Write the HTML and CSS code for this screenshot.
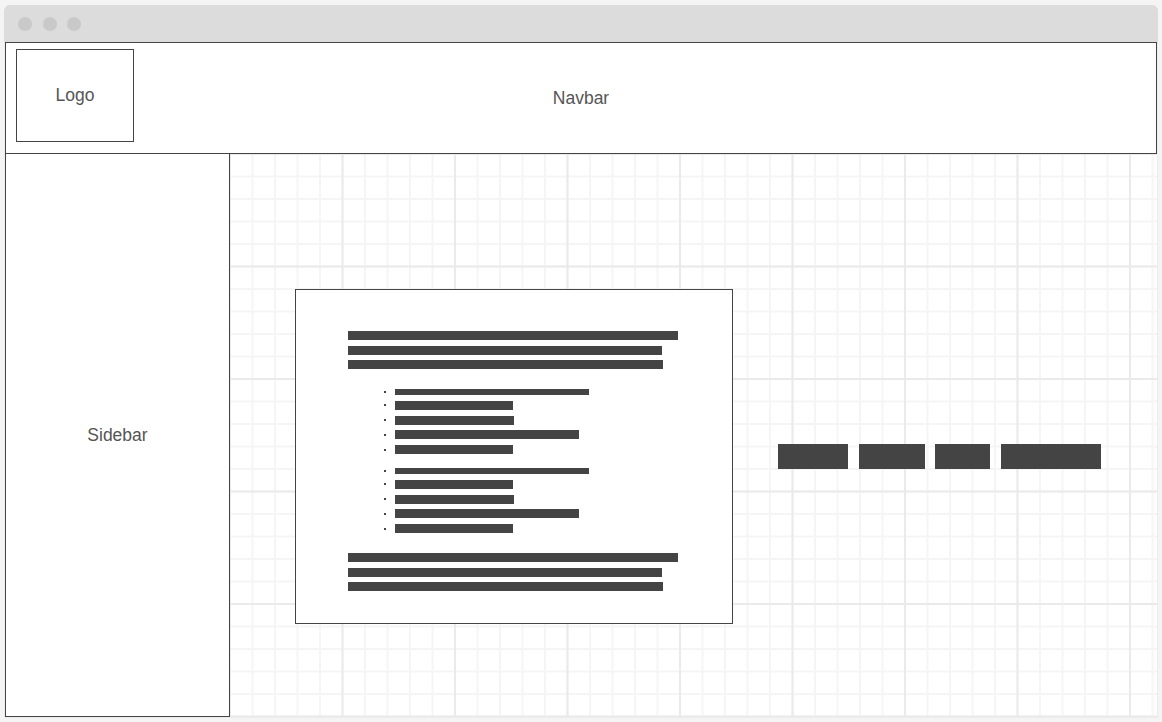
FILE: index.html
```html
<!DOCTYPE html>
<html lang="en">
<head>
<meta charset="utf-8">
<title>Wireframe</title>
<link rel="stylesheet" href="styles.css">
</head>
<body>
<div class="window">
  <div class="titlebar">
    <span class="dot"></span>
    <span class="dot"></span>
    <span class="dot"></span>
  </div>
  <div class="frame">
    <header class="navbar">
      <div class="logo">Logo</div>
      <div class="nav-label">Navbar</div>
      <div class="nav-spacer"></div>
    </header>
    <div class="body">
      <aside class="sidebar">Sidebar</aside>
      <main class="main">
        <div class="row">
          <section class="doc">
            <div class="para">
              <div class="bar w330"></div>
              <div class="bar w314"></div>
              <div class="bar w315"></div>
            </div>
            <ul class="list first">
              <li><span class="bar thin w194"></span></li>
              <li><span class="bar w118"></span></li>
              <li><span class="bar w119"></span></li>
              <li><span class="bar w184"></span></li>
              <li><span class="bar w118"></span></li>
            </ul>
            <ul class="list second">
              <li><span class="bar thin w194"></span></li>
              <li><span class="bar w118"></span></li>
              <li><span class="bar w119"></span></li>
              <li><span class="bar w184"></span></li>
              <li><span class="bar w118"></span></li>
            </ul>
            <div class="para last">
              <div class="bar w330"></div>
              <div class="bar w314"></div>
              <div class="bar w315"></div>
            </div>
          </section>
          <div class="buttons">
            <span class="btn b1"></span>
            <span class="btn b2"></span>
            <span class="btn b3"></span>
            <span class="btn b4"></span>
          </div>
        </div>
      </main>
    </div>
  </div>
</div>
</body>
</html>
```
FILE: styles.css
```css
* { box-sizing: border-box; }

html, body { margin: 0; padding: 0; }

body {
  background: #f4f4f4;
  font-family: "Liberation Sans", Arial, sans-serif;
  color: #555;
  font-size: 17.5px;
  padding: 5px 0 0 4px;
}

.window {
  width: 1154px;
  height: 713px;
  background: #ececec;
  border-radius: 6px 6px 0 0;
  overflow: hidden;
  display: flex;
  flex-direction: column;
}

.titlebar {
  height: 37px;
  background: #dcdcdc;
  display: flex;
  align-items: center;
  padding-left: 14px;
  gap: 10.5px;
  flex: none;
}

.dot {
  width: 14px;
  height: 14px;
  border-radius: 50%;
  background: #c9c9c9;
}

.frame {
  flex: 1;
  padding: 0 1px 1px 1px;
  display: flex;
  flex-direction: column;
}

.navbar {
  height: 112px;
  border: 1px solid #444;
  background: #fff;
  display: grid;
  grid-template-columns: 1fr auto 1fr;
  flex: none;
}

.logo {
  width: 118px;
  height: 93px;
  border: 1px solid #444;
  margin: 6px 0 0 10px;
  display: flex;
  align-items: center;
  justify-content: center;
  padding-bottom: 1px;
}

.nav-label {
  align-self: center;
  padding-top: 1px;
}

.body {
  flex: 1;
  display: flex;
  min-height: 0;
}

.sidebar {
  width: 225px;
  flex: none;
  background: #fff;
  border: 1px solid #444;
  border-top: none;
  display: flex;
  align-items: center;
  justify-content: center;
}

.main {
  flex: 1;
  background-color: #fff;
  background-image:
    linear-gradient(90deg, #eaeaea 0 2px, transparent 2px),
    linear-gradient(180deg, #eaeaea 0 2px, transparent 2px),
    linear-gradient(90deg, #f5f5f5 0 2px, transparent 2px),
    linear-gradient(180deg, #f5f5f5 0 2px, transparent 2px);
  background-size: 112.5px 112.5px, 112.5px 112.5px, 22.5px 22.5px, 22.5px 22.5px;
  background-position: -1px -1px;
  padding: 135px 0 0 65px;
}

.row {
  display: flex;
  align-items: center;
  gap: 45px;
}

.doc {
  width: 438px;
  height: 335px;
  border: 1px solid #444;
  background: #fff;
  padding: 41px 0 0 52px;
  flex: none;
}

.bar {
  display: block;
  height: 9px;
  background: #444;
}

.bar.thin { height: 6px; }

.para {
  display: flex;
  flex-direction: column;
  gap: 5.5px;
}

.para.last { margin-top: 20px; }

.list {
  list-style: none;
  margin: 0;
  padding: 0 0 0 36px;
  display: flex;
  flex-direction: column;
  gap: 5.75px;
}

.list.first { margin-top: 20px; }
.list.second { margin-top: 14px; }

.list li {
  display: flex;
  align-items: center;
}

.list li::before {
  content: "";
  width: 2px;
  height: 2px;
  background: #444;
  margin-right: 9px;
  flex: none;
}

.w330 { width: 330px; }
.w314 { width: 314px; }
.w315 { width: 315px; }
.w194 { width: 194px; }
.w184 { width: 184px; }
.w119 { width: 119px; }
.w118 { width: 118px; }

.buttons {
  display: flex;
}

.btn {
  height: 25px;
  background: #444;
}

.b1 { width: 70px; }
.b2 { width: 66px; margin-left: 11px; }
.b3 { width: 55px; margin-left: 10px; }
.b4 { width: 100px; margin-left: 11px; }
```
